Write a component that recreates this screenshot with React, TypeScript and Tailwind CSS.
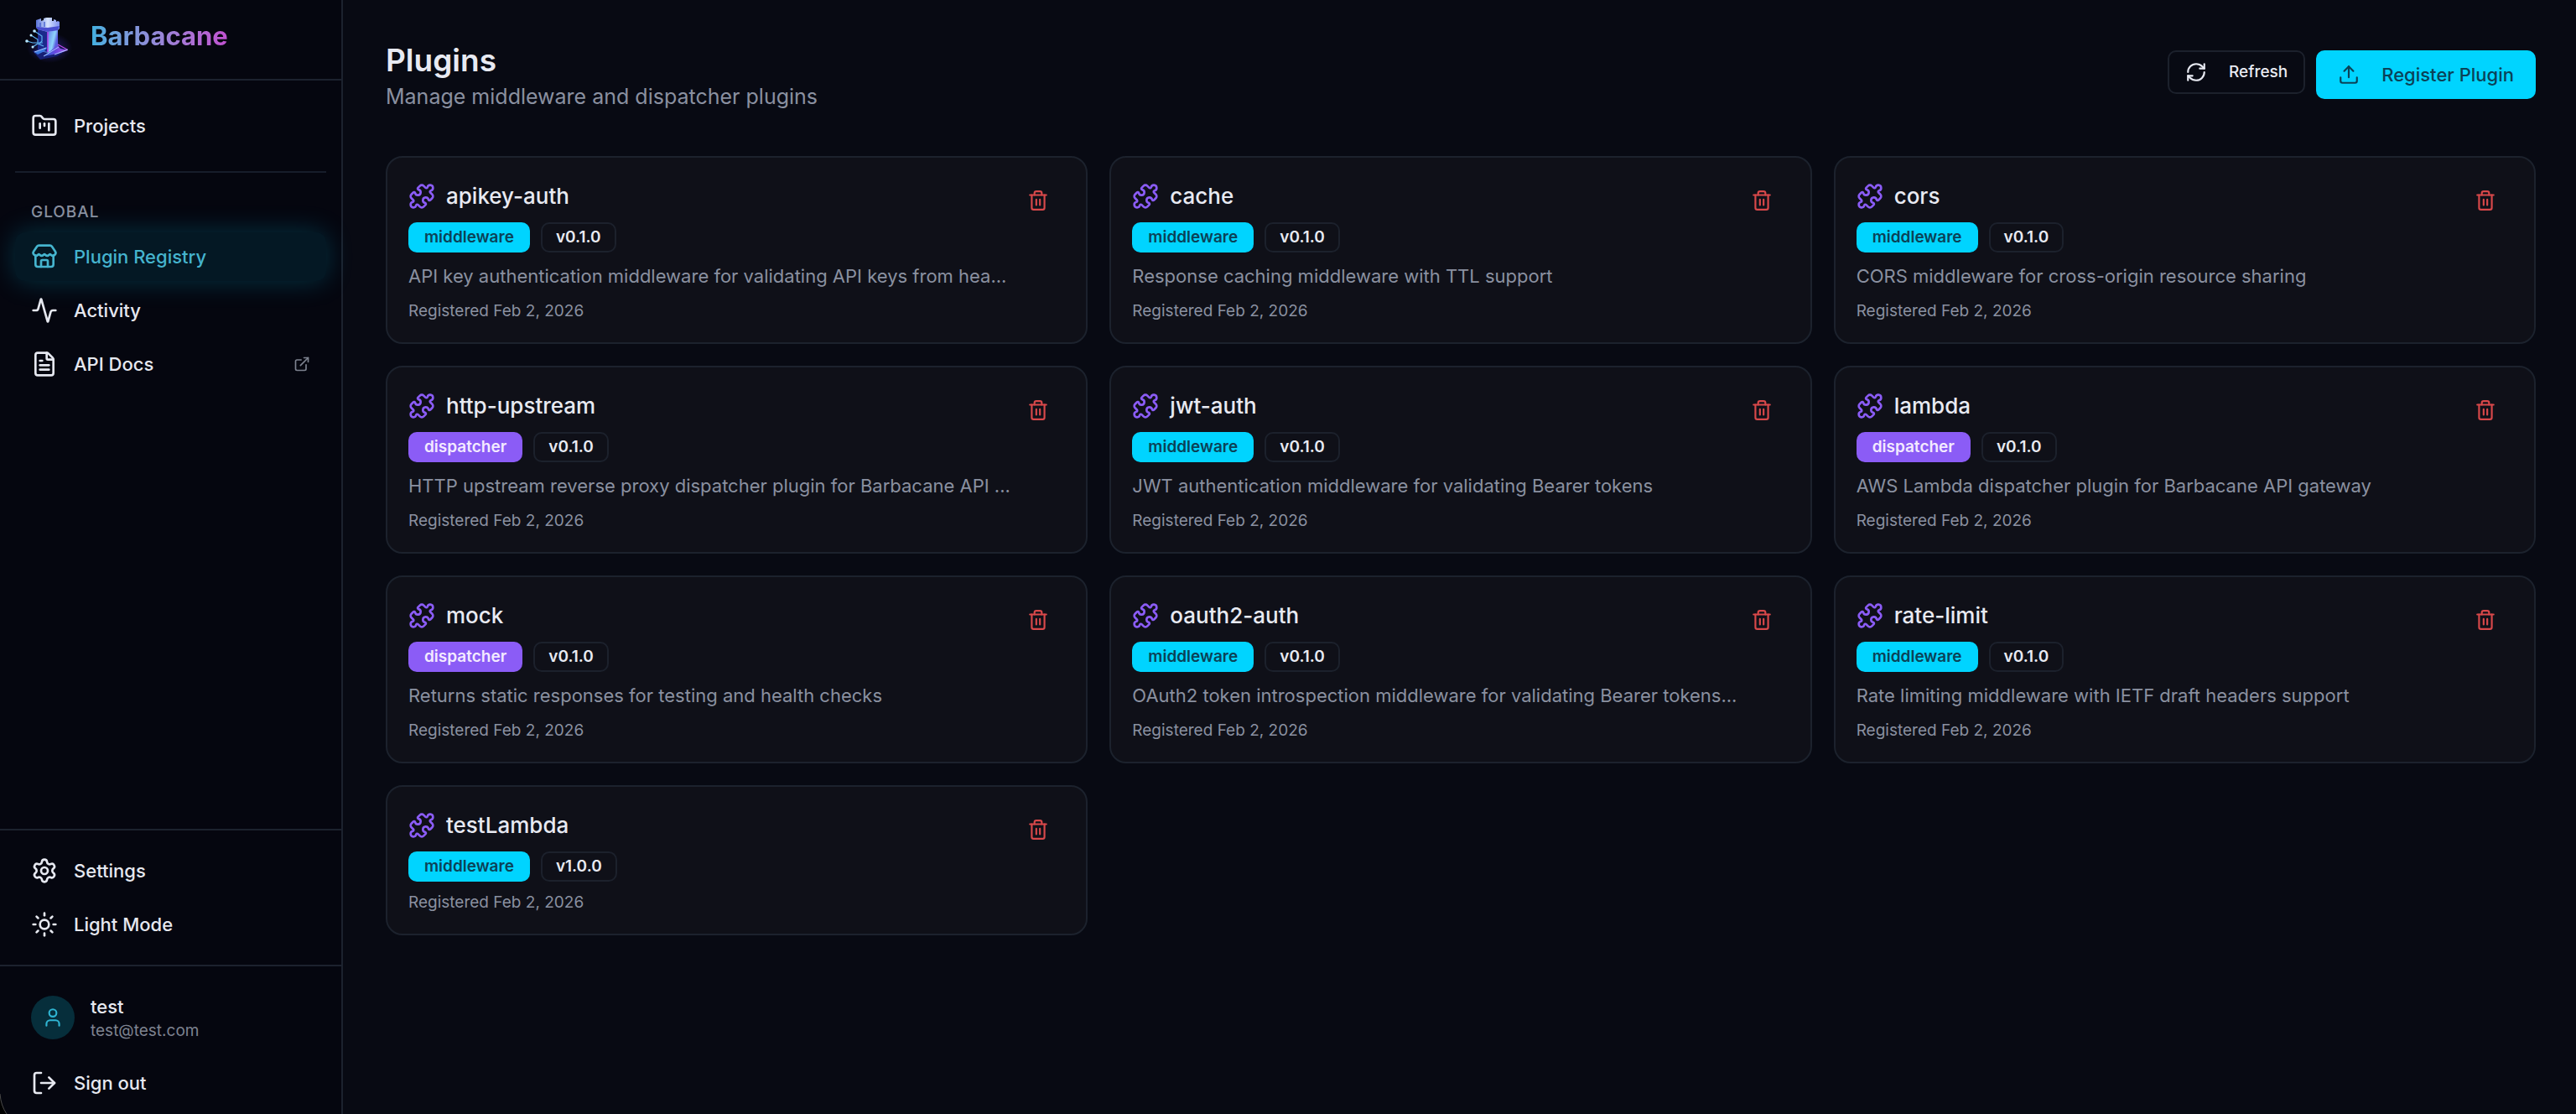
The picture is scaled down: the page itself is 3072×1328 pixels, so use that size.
import {
  Activity,
  ExternalLink,
  FileText,
  FolderKanban,
  LogOut,
  Puzzle,
  RefreshCw,
  Settings,
  Store,
  Sun,
  Trash2,
  Upload,
  User,
} from "lucide-react";
import type { LucideIcon } from "lucide-react";
import type { ReactNode } from "react";

type Plugin = {
  name: string;
  kind: "middleware" | "dispatcher";
  version: string;
  description?: string;
  registered: string;
};

const plugins: Plugin[] = [
  { name: "apikey-auth", kind: "middleware", version: "v0.1.0", description: "API key authentication middleware for validating API keys from hea...", registered: "Feb 2, 2026" },
  { name: "cache", kind: "middleware", version: "v0.1.0", description: "Response caching middleware with TTL support", registered: "Feb 2, 2026" },
  { name: "cors", kind: "middleware", version: "v0.1.0", description: "CORS middleware for cross-origin resource sharing", registered: "Feb 2, 2026" },
  { name: "http-upstream", kind: "dispatcher", version: "v0.1.0", description: "HTTP upstream reverse proxy dispatcher plugin for Barbacane API ...", registered: "Feb 2, 2026" },
  { name: "jwt-auth", kind: "middleware", version: "v0.1.0", description: "JWT authentication middleware for validating Bearer tokens", registered: "Feb 2, 2026" },
  { name: "lambda", kind: "dispatcher", version: "v0.1.0", description: "AWS Lambda dispatcher plugin for Barbacane API gateway", registered: "Feb 2, 2026" },
  { name: "mock", kind: "dispatcher", version: "v0.1.0", description: "Returns static responses for testing and health checks", registered: "Feb 2, 2026" },
  { name: "oauth2-auth", kind: "middleware", version: "v0.1.0", description: "OAuth2 token introspection middleware for validating Bearer tokens...", registered: "Feb 2, 2026" },
  { name: "rate-limit", kind: "middleware", version: "v0.1.0", description: "Rate limiting middleware with IETF draft headers support", registered: "Feb 2, 2026" },
  { name: "testLambda", kind: "middleware", version: "v1.0.0", registered: "Feb 2, 2026" },
];

function Logo() {
  return (
    <svg viewBox="0 0 64 64" className="size-16 shrink-0" aria-hidden="true">
      <defs>
        <linearGradient id="tower" x1="0" x2="1" y1="0" y2="0.3">
          <stop offset="0" stopColor="#2b3fae" />
          <stop offset="0.45" stopColor="#4a3fc4" />
          <stop offset="0.6" stopColor="#6f9cf0" />
          <stop offset="0.85" stopColor="#8fd4fb" />
          <stop offset="1" stopColor="#5a5fe0" />
        </linearGradient>
        <linearGradient id="crown" x1="0" x2="1" y1="0" y2="0">
          <stop offset="0" stopColor="#5a73d8" />
          <stop offset="0.5" stopColor="#d6e4ff" />
          <stop offset="1" stopColor="#7d8ff0" />
        </linearGradient>
        <linearGradient id="base" x1="0" x2="1" y1="0" y2="0">
          <stop offset="0" stopColor="#2464d8" />
          <stop offset="0.5" stopColor="#6a48e0" />
          <stop offset="1" stopColor="#b65cf0" />
        </linearGradient>
        <radialGradient id="aura">
          <stop offset="0" stopColor="#4338ca" stopOpacity="0.55" />
          <stop offset="1" stopColor="#4338ca" stopOpacity="0" />
        </radialGradient>
      </defs>
      <ellipse cx="35" cy="46" rx="27" ry="18" fill="url(#aura)" />
      <path d="M15 50 34 43 57 48 44 56 24 60Z" fill="#161f74" />
      <path d="M21 22 45 22 45 49 35 52 21 50Z" fill="url(#tower)" />
      <path d="M21 23 33 26 33 51 21 49Z" fill="#1b2a8c" />
      <path d="M33 26 33 51" stroke="#b44cf0" strokeWidth="1.6" />
      <path d="M19 13 25 11 25 14 28 13 28 11 31 10 38 10 38 14 40 14 40 12 43 13 43 15 45 14 47 15 47 23 45 25 33 27 21 24 19 22Z" fill="url(#crown)" />
      <path d="M19 21 33 22 47 20 45 25 33 27 21 24Z" fill="#4a4fd0" />
      <path d="M24 16v5M29 15v6" stroke="#4561cf" strokeWidth="1.4" />
      <g fill="none" stroke="#5cb2f0" strokeWidth="1.2">
        <path d="M17 26 26 32 26 38 23 41" />
        <path d="M13 31 21 36 21 40" />
        <path d="M8 38 15 40 27 40" />
        <path d="M15 45 21 41 28 44" />
      </g>
      <g fill="#b8e8ff">
        <circle cx="17" cy="26" r="1.8" />
        <circle cx="13" cy="31" r="1.5" />
        <circle cx="8" cy="38" r="1.8" />
        <circle cx="15" cy="45" r="1.5" />
      </g>
      <path d="M17 51 33 45 29 50 21 54Z" fill="#3a78e0" />
      <path d="M28 56 45 43 48 47 57 49 45 53Z" fill="url(#base)" />
      <path d="M17 51 31 46M28 56 46 45M41 54 57 48" stroke="#a9c8ff" strokeWidth="1" />
      <path d="M45 42 56 48" stroke="#c04cf0" strokeWidth="1.2" />
    </svg>
  );
}

function NavItem({
  icon: Icon,
  active,
  trailing,
  children,
}: {
  icon: LucideIcon;
  active?: boolean;
  trailing?: ReactNode;
  children: ReactNode;
}) {
  return (
    <a
      href="#"
      aria-current={active ? "page" : undefined}
      className={
        "flex h-[58px] items-center gap-[19px] rounded-xl px-[19px] text-[22px] font-medium " +
        (active
          ? "bg-[#00d4ff]/9 text-[#45b4ce] shadow-[0_0_32px_rgba(0,212,255,0.22)]"
          : "text-[#e6e8f0]")
      }
    >
      <Icon className="size-8 shrink-0" aria-hidden="true" />
      <span className="flex-1">{children}</span>
      {trailing}
    </a>
  );
}

function Sidebar() {
  return (
    <aside className="relative flex w-[409px] shrink-0 flex-col border-r-2 border-[#1c222e] bg-[#05060f]">
      <div className="flex h-24 items-center gap-5 border-b-2 border-[#1c222e] px-6 pb-2">
        <Logo />
        <span className="bg-linear-to-r from-[#3fb0e0] to-[#c050d0] bg-clip-text text-[31px] font-bold text-transparent">
          Barbacane
        </span>
      </div>

      <nav className="flex flex-1 flex-col px-[18px] pt-[25px]" aria-label="Main">
        <NavItem icon={FolderKanban}>Projects</NavItem>
        <hr className="mt-[25px] border-t-2 border-[#171d2a]" />
        <h2 className="mt-[34px] mb-[11px] px-[19px] text-[19px] leading-[26px] font-medium tracking-wider text-[#8a8f9e]">
          GLOBAL
        </h2>
        <div className="flex flex-col gap-[6px]">
          <NavItem icon={Store} active>
            Plugin Registry
          </NavItem>
          <NavItem icon={Activity}>Activity</NavItem>
          <NavItem
            icon={FileText}
            trailing={<ExternalLink className="size-5 text-[#7d828f]" aria-label="Opens in a new tab" />}
          >
            API Docs
          </NavItem>
        </div>
      </nav>

      <div className="flex flex-col gap-[6px] border-t-2 border-[#1c222e] px-[18px] py-[19px]">
        <NavItem icon={Settings}>Settings</NavItem>
        <button type="button" className="flex h-[58px] items-center gap-[19px] rounded-xl px-[19px] text-left text-[22px] font-medium text-[#e6e8f0]">
          <Sun className="size-8 shrink-0" aria-hidden="true" />
          Light Mode
        </button>
      </div>

      <div className="flex flex-col border-t-2 border-[#1c222e] px-[18px] pt-8 pb-2">
        <div className="flex items-center gap-[19px] px-[19px]">
          <div className="flex size-[52px] items-center justify-center rounded-full bg-[#062e3b]">
            <User className="size-[26px] text-[#2fb4d2]" aria-hidden="true" />
          </div>
          <div>
            <p className="text-[22px] leading-8 font-medium text-[#e6e8f0]">test</p>
            <p className="text-[19px] leading-[26px] text-[#7d828f]">test@test.com</p>
          </div>
        </div>
        <button type="button" className="mt-5 flex h-[58px] items-center gap-[19px] rounded-xl px-[19px] text-left text-[22px] font-medium text-[#e6e8f0]">
          <LogOut className="size-8 shrink-0" aria-hidden="true" />
          Sign out
        </button>
      </div>

      <svg viewBox="0 0 10 24" className="absolute bottom-0 left-0 h-6 w-[10px]" aria-hidden="true">
        <path d="M0 0Q1 14 8 24H0Z" fill="#000" />
        <path d="M0 0Q1 14 8 24" fill="none" stroke="#4a4a4a" strokeWidth="1" />
      </svg>
    </aside>
  );
}

function PluginCard({ plugin }: { plugin: Plugin }) {
  return (
    <li className="flex items-start justify-between self-start rounded-[20px] border-2 border-[#1c222d] bg-[#0f1018] px-[25px] pt-[25px] pb-6">
      <div className="min-w-0">
        <div className="flex items-center gap-[13px] pt-[3px]">
          <Puzzle className="size-8 shrink-0 text-[#8b5cf6]" aria-hidden="true" />
          <h2 className="text-[26px] leading-9 font-medium text-[#e8eaf2]">{plugin.name}</h2>
        </div>
        <div className="mt-[13px] flex gap-[13px] text-[19px] leading-[26px]">
          <span
            className={
              "rounded-[10px] px-[19px] py-[5px] font-semibold " +
              (plugin.kind === "middleware" ? "bg-[#00d4ff] text-[#0b4257]" : "bg-[#8b5cf6] text-[#f3eaff]")
            }
          >
            {plugin.kind}
          </span>
          <span className="rounded-[10px] border-2 border-[#1c212c] px-4 py-[3px] font-semibold text-[#e8eaf2]">
            {plugin.version}
          </span>
        </div>
        {plugin.description && (
          <p className="mt-3 truncate text-[22px] leading-[33px] text-[#8a90a0]">{plugin.description}</p>
        )}
        <p className="mt-3 text-[19px] leading-[26px] text-[#8a90a0]">Registered {plugin.registered}</p>
      </div>
      <button
        type="button"
        aria-label={`Delete ${plugin.name}`}
        className="mr-[7px] flex size-[51px] shrink-0 items-center justify-center rounded-xl text-[#d8484a]"
      >
        <Trash2 className="size-[26px]" aria-hidden="true" />
      </button>
    </li>
  );
}

export default function App() {
  return (
    <div className="flex min-h-screen bg-[#080a13] font-['Inter',sans-serif]">
      <Sidebar />
      <main className="min-w-0 flex-1 py-12 pr-12 pl-[51px]">
        <header className="mb-[51px] flex items-start justify-between">
          <div>
            <h1 className="text-[37px] leading-[47px] font-semibold text-[#e8eaf2]">Plugins</h1>
            <p className="text-[25px] leading-10 text-[#8a90a0]">Manage middleware and dispatcher plugins</p>
          </div>
          <div className="flex items-start gap-[13px] pt-3">
            <button
              type="button"
              className="flex h-[52px] items-center gap-[26px] rounded-[10px] border-2 border-[#1c212c] px-[19px] text-[19px] font-medium text-[#e8eaf2]"
            >
              <RefreshCw className="size-[26px]" aria-hidden="true" />
              Refresh
            </button>
            <button
              type="button"
              className="flex h-[58px] items-center gap-[26px] rounded-[10px] bg-[#00d4ff] px-[26px] text-[22px] font-medium text-[#0b4257]"
            >
              <Upload className="size-[26px]" aria-hidden="true" />
              Register Plugin
            </button>
          </div>
        </header>

        <ul className="grid grid-cols-3 gap-[26px]">
          {plugins.map((plugin) => (
            <PluginCard key={plugin.name} plugin={plugin} />
          ))}
        </ul>
      </main>
    </div>
  );
}
